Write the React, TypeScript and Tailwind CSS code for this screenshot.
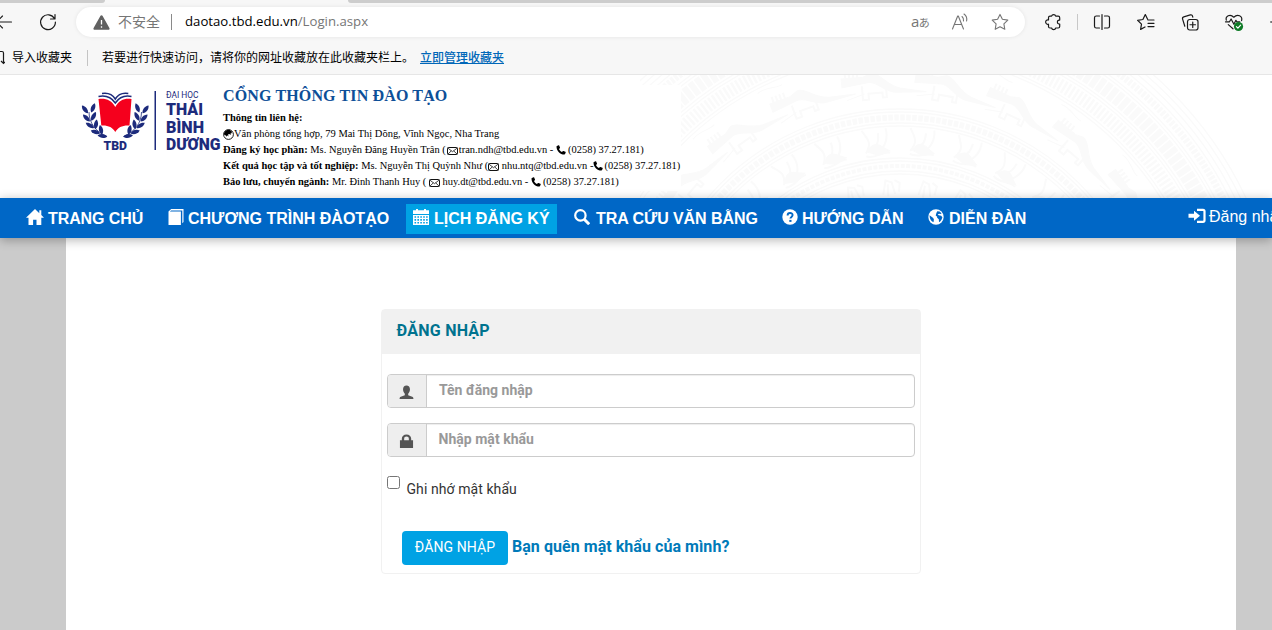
import React from "react";

const NAVY = "#1d2b7c";

/* ---------- browser chrome icons ---------- */

function Line({ children, className = "", size = 20 }: { children: React.ReactNode; className?: string; size?: number }) {
  return (
    <svg width={size} height={size} viewBox="0 0 20 20" fill="none" stroke="currentColor" strokeWidth="1.1" strokeLinecap="round" strokeLinejoin="round" className={"block shrink-0 " + className}>
      {children}
    </svg>
  );
}

const BackIcon = () => <Line><path d="M17.500 10H2.500M8.500 4 2.500 10l6 6" /></Line>;
const ReloadIcon = () => <Line><path d="M16.600 6.800A7.400 7.400 0 1 0 17.400 10M17 2.600v4.400h-4.500" strokeWidth="1.200" /></Line>;
const StarIcon = () => <Line><path d="m10 2.400 2.400 4.900 5.400.8-3.900 3.800.9 5.400-4.800-2.600-4.800 2.600.9-5.400-3.900-3.800 5.400-.8z" /></Line>;
const PuzzleIcon = () => (
  <Line><path d="M7 4.200h1.600a2.100 2.100 0 0 1 4.100 0h2.500c.8 0 1.500.7 1.500 1.500v2.400h-.8a2 2 0 0 0 0 3.900h.8v2.500c0 .8-.7 1.500-1.500 1.500h-2.500a2.100 2.100 0 0 1-4.100 0H7c-.8 0-1.500-.7-1.500-1.500v-2.300a2.200 2.200 0 1 1 0-4.200V5.700c0-.8.7-1.500 1.500-1.500z" strokeWidth="1.200" /></Line>
);
const SplitIcon = () => (
  <Line><path d="M7.500 4H4.300C3.300 4 2.500 4.800 2.500 5.800v8.400c0 1 .8 1.800 1.800 1.800h3.200M12.500 4h3.200c1 0 1.800.8 1.800 1.800v8.400c0 1-.8 1.800-1.800 1.800h-3.200M10 2.500v15" strokeWidth="1.200" /></Line>
);
const FavListIcon = () => (
  <Line><path d="M9 15 4.600 17.400l.9-5.300-3.900-3.800 5.300-.8 2.400-4.900 2.300 4.700M12 8h6M12 11.300h6M12 14.600h6" strokeWidth="1.200" /></Line>
);
const CollectionsIcon = () => (
  <Line><rect x="7.500" y="7.500" width="10.500" height="10.500" rx="2.200" strokeWidth="1.200" /><path d="M12.750 10v5.500M10 12.750h5.500M4.800 14.200 2.600 7.100c-.3-1 .2-1.900 1.200-2.200l6.500-2c1-.3 1.900.2 2.200 1.200l.3 1.100" strokeWidth="1.200" /></Line>
);
const HealthIcon = () => (
  <Line>
    <path d="M2.300 8.200C1.200 4.200 6 1.500 9.800 5.200 13.600 1.500 18.800 4 17.600 8.600M1.500 9.800h4l1.600-2.800 2.800 5.300 2-4 .9 1.500h3M4.300 12.600l4.700 4.200" strokeWidth="1.200" />
    <circle cx="14.500" cy="14.500" r="4.600" fill="#0f7b27" stroke="none" />
    <path d="m12.400 14.600 1.500 1.500 2.700-2.900" stroke="#fff" strokeWidth="1.200" />
  </Line>
);
const WarnIcon = () => (
  <svg width="17" height="15" viewBox="0 0 17 15" className="block shrink-0">
    <path d="M7.500.8a1.100 1.100 0 0 1 2 0l6.900 12.300a1.100 1.100 0 0 1-1 1.700H1.600a1.100 1.100 0 0 1-1-1.700z" fill="#616161" />
    <path d="M8.500 5v4.600M8.500 11.200v1.500" stroke="#fff" strokeWidth="1.300" />
  </svg>
);

/* ---------- navigation and form glyphs (16-unit grid) ---------- */

function Glyph({ children, size = 16, className = "" }: { children: React.ReactNode; size?: number; className?: string }) {
  return <svg width={size} height={size} viewBox="0 0 16 16" fill="currentColor" className={"block shrink-0 " + className}>{children}</svg>;
}
const HomeGlyph = () => (
  <svg width="18" height="16" viewBox="0 0 18 16" fill="currentColor" className="-mt-[4px] block shrink-0"><path d="M9 0 0 8.700h2.500V16h4.600v-5.200h3.400V16h4.800V8.700H18l-2.700-2.600V1.300h-2v2.900z" /></svg>
);
const BookGlyph = () => <Glyph className="-mt-[4px]"><path d="M3.200 0H15.500v13l-1.200 1.300V1.400H3.100L1.800 2.600h11.100V16H.5V2.600z" /></Glyph>;
const CalendarGlyph = () => (
  <Glyph className="-mt-[4px]"><path fillRule="evenodd" d="M0 1.300h3V0h2v1.300h6V0h2v1.300h3V5H0zM0 6h16v10H0zM1.500 7.200v1.600h1.600V7.200zm2.900 0v1.600H6V7.200zm2.900 0v1.600h1.600V7.200zm2.900 0v1.600h1.600V7.200zm2.900 0v1.600h1.600V7.200zM1.500 10.100v1.600h1.600v-1.600zm2.900 0v1.600H6v-1.600zm2.900 0v1.600h1.600v-1.600zm2.900 0v1.600h1.600v-1.600zm2.900 0v1.600h1.600v-1.600zM1.500 13v1.600h1.600V13zm2.900 0v1.600H6V13zm2.900 0v1.600h1.600V13zm2.900 0v1.600h1.600V13zm2.900 0v1.600h1.600V13z" /></Glyph>
);
const SearchGlyph = () => <Glyph className="-mt-[4px]"><circle cx="6.400" cy="6.400" r="5.200" fill="none" stroke="currentColor" strokeWidth="2.200" /><path d="m10.200 10.200 5 5" stroke="currentColor" strokeWidth="3" /></Glyph>;
const HelpGlyph = () => (
  <Glyph className="-mt-[4px]"><circle cx="8" cy="8" r="7.700" /><path d="M5.600 6.400c0-3.200 5-3 5-.3 0 1.900-2.200 1.700-2.200 3.500" fill="none" stroke="#0067c6" strokeWidth="1.900" /><path d="M7.300 10.900h2.200v2H7.300z" fill="#0067c6" /></Glyph>
);
const GlobeGlyph = () => (
  <Glyph className="-mt-[4px]"><circle cx="8" cy="8" r="7.700" /><path d="M9.300 2.300 11.600 2.500l2 2-1 .6-1.600-.4-1.300.8 1 .8 2.400.5 1.300 1.400-.9 2.600-1.700 2.300-.8-.4-.2-2.400-1.700-1.600.1-1-1.500-1.100.7-2.600zM1.500 6.300l1.400.9 2.300 1.900.7 1.400-.4 2.700C3 12.200 1.600 9.800 1.500 6.300z" fill="#0067c6" /></Glyph>
);
const EarthMark = () => (
  <svg width="11" height="11" viewBox="0 0 11 11" className="block shrink-0"><circle cx="5.500" cy="5.500" r="4.900" fill="#fff" stroke="#000" strokeWidth=".9" /><path d="M.8 5.500C1 2 4 .4 6.500.8l2.500 2-.5 1.400-1 .2.300 1.600-1.600-1L5 5.500l.6 2L4 6.300l-.4 1.400L2.500 6.300z" /></svg>
);
const LoginGlyph = () => (
  <svg width="18" height="16" viewBox="0 0 18 16" className="-mt-[2px] block shrink-0" fill="none" stroke="currentColor" strokeWidth="2.200"><path d="M9 1.800h6c1 0 1.500.5 1.500 1.500v9c0 1-.5 1.500-1.500 1.500H9" /><path d="M6 2.800v3H.5v4H6v3l6-5z" fill="currentColor" stroke="none" /></svg>
);
const UserGlyph = () => <Glyph size={15}><path d="M8 .5c2.300 0 3.700 1.600 3.700 4.100 0 2-.8 3.700-1.900 4.600v1.700l4.300 1.700c.9.4 1.300 1 1.300 2.400H.6c0-1.400.4-2 1.300-2.400l4.300-1.700V9.200C5.100 8.300 4.300 6.600 4.300 4.600 4.300 2.100 5.700.5 8 .5z" /></Glyph>;
const LockGlyph = () => <Glyph size={15}><path fillRule="evenodd" d="M1 6.700h2V5C3 2.300 5.100.4 8 .4S13 2.300 13 5v1.700h2V15H1zm4.500 0h5V5c0-1.500-1-2.300-2.500-2.300S5.500 3.500 5.500 5z" /></Glyph>;

const Mail = () => (
  <svg width="11" height="8" viewBox="0 0 11 8" className="mt-px block shrink-0" fill="none" stroke="#111" strokeWidth="1"><rect x=".5" y=".5" width="10" height="7" rx=".8" /><path d="m1 1.200 4.500 3.500L10 1.200M1 7l3.300-3.100M10 7 6.700 3.900" strokeWidth=".8" /></svg>
);
const Phone = () => (
  <svg width="10" height="10" viewBox="0 0 16 16" className="block shrink-0" fill="#000"><path d="M1.500 1.500 4 .5c.6-.2 1 0 1.200.5l1.200 3c.2.500 0 .9-.3 1.200L4.800 6.500c1 2.200 2.500 3.700 4.700 4.700l1.300-1.300c.3-.3.700-.5 1.200-.3l3 1.200c.5.2.7.6.5 1.200l-1 2.500c-.2.500-.6.700-1.100.7C6.500 15 1 9.500.8 2.600c0-.5.2-.9.700-1.100z" /></svg>
);

/* ---------- university logo ---------- */

const LEAVES: [number, number, number][] = [
  [5, 25.5, -38], [13, 24, 22], [6.5, 34, -45], [13.5, 32.5, 28], [10, 41.5, -58], [16, 40.5, 8], [15.500, 48, -72], [21, 46, -12], [22.500, 52, -82],
];
function Branch() {
  return (
    <g fill={NAVY}>
      {LEAVES.map(([x, y, r], i) => (
        <path key={i} d="M0-5C2.800-2 2.600 2.300 0 4.800-2.600 2.300-2.800-2 0-5z" transform={`translate(${x} ${y}) rotate(${r})`} />
      ))}
      <path d="M9 28c0 11 7 20 18 24.500" fill="none" stroke={NAVY} strokeWidth=".8" />
    </g>
  );
}
function Logo() {
  return (
    <svg width="143" height="66" viewBox="80 88 143 66" className="block shrink-0" fontFamily="Roboto, sans-serif">
      <g transform="translate(80 84)"><Branch /></g>
      <g transform="translate(150.5 84) scale(-1 1)"><Branch /></g>
      <path d="M98.500 99c7-1 13 1 16.800 8C119 100 124.500 98 131.500 99l-2 26.500c-6.500-.5-11.500 1.500-14.200 6.500-2.700-5-7.800-7-14-6.500z" fill="#f5001d" />
      <path d="M98.500 96.500c7.500-1.500 13 1 16.800 6.500 3.700-5.500 9-8 16.200-6.500M102 93.500c6-1 10.500 1 13.300 5.500 2.700-4.500 7-6.500 13-5.500" fill="none" stroke={NAVY} strokeWidth="1.500" />
      <text x="103.500" y="150" fontSize="13" fontWeight="900" fill={NAVY} textLength="23.500" lengthAdjust="spacingAndGlyphs">TBD</text>
      <rect x="154.500" y="91" width="1.500" height="59" fill={NAVY} />
      <g fill={NAVY}>
        <text x="166" y="98" fontSize="8.3" textLength="32.5" lengthAdjust="spacingAndGlyphs">ĐẠI HỌC</text>
        <g fontSize="16.2" fontWeight="900">
          <text x="166" y="115" textLength="37" lengthAdjust="spacingAndGlyphs">THÁI</text>
          <text x="166" y="132.5" textLength="38" lengthAdjust="spacingAndGlyphs">BÌNH</text>
          <text x="166" y="149.700" textLength="54.5" lengthAdjust="spacingAndGlyphs">DƯƠNG</text>
        </g>
      </g>
    </svg>
  );
}

/* ---------- faint bronze drum behind the header ---------- */

const RINGS = [204, 201, 191, 188, 253, 250, 239, 236, 308, 311, 329, 332, 352, 355, 368, 373, 378, 383];
const BIRDS = [-50, -35, -20, -5, 10, 25, 40, 55];
const FIGURES = [-54, -42, -30, -18, -6, 6, 18, 30, 42, 54];
function Drum() {
  return (
    <svg width="632" height="123" viewBox="640 75 632 123" className="absolute right-0 top-0" fill="none" stroke="#fafafa">
      <g transform="translate(900 362)">
        {RINGS.map((r) => <circle key={r} r={r} strokeWidth="1.300" />)}
        <circle r="196" strokeWidth="4" strokeDasharray="4 1.500" />
        <circle r="244.500" strokeWidth="6" strokeDasharray="4.500 1.500" />
        <circle r="320" strokeWidth="13" strokeDasharray="2.500 2" />
        <circle r="342" strokeWidth="15" strokeDasharray="6 1.500" />
        <circle r="362" strokeWidth="7" strokeDasharray="3 1.500" />
        {BIRDS.map((a) => (
          <g key={a} transform={`rotate(${a}) translate(0 -279)`}>
            <path d="M-34-8h22l8-3C4-12 10 2 24 6l26 6-30-2C8 9 2-3-8-2l-26 3z" fill="#fafafa" />
            <path d="M-14 1v14h6V9h14v5h4V3M-30-8v-6M-26-8v-6M-22-8v-6M-18-8v-6" strokeWidth="2" />
            <path d="M-42-22c10-4 18 2 26 0M-30 14l18-5" />
          </g>
        ))}
        {FIGURES.map((a) => (
          <g key={a} transform={`rotate(${a}) translate(0 -220)`}>
            <path d="M-12 9C-4-2-10-6-14-14M-6 4c6 0 8-6 8-14M0 10C8 4 12-3 10-14M-12 12c8 4 18-4 24-1" strokeWidth="2" />
            <path d="M-10 8c4-8 10-9 16-3L12 9 0 12z" fill="#fafafa" />
          </g>
        ))}
        {FIGURES.map((a) => <path key={a} d="M-8 8-5-6l6 2 3 12M-3-2v12M4-6l5 3-1 9" strokeWidth="2" transform={`rotate(${a + 3}) translate(0 -176)`} />)}
      </g>
    </svg>
  );
}

const T = ({ children }: { children: React.ReactNode }) => <span className="whitespace-pre">{children}</span>;
const B = ({ children }: { children: React.ReactNode }) => <b className="whitespace-pre font-bold">{children}</b>;

export default function App() {
  return (
    <div className="flex h-[630px] w-[1272px] flex-col overflow-hidden bg-white">
      <div className="flex h-[3px] shrink-0 bg-[#f7f7f7]">
        <div className="h-[3px] w-[105px] rounded-br-[3px] bg-[#cdcdcd]" />
        <div className="ml-[243px] h-[3px] flex-1 rounded-bl-[3px] bg-[#cdcdcd]" />
      </div>
      <div className="flex h-[72px] shrink-0 flex-col border-b border-[#e6e6e6] bg-[#f7f7f7] font-['Open_Sans','Noto_Sans_CJK_SC',sans-serif] text-[#1a1a1a]">
        <div className="flex h-[38px] items-center">
          <div className="-ml-[6px]"><BackIcon /></div>
          <div className="ml-[24px]"><ReloadIcon /></div>
          <div className="ml-[18px] flex h-[30px] w-[949px] shrink-0 items-center rounded-full bg-white pl-[17px] text-[#767676] shadow-[0_0_4px_rgba(0,0,0,0.08)]">
            <WarnIcon />
            <span className="-mt-px ml-2 w-[53px] text-[14px]">不安全</span>
            <div className="h-4 w-px bg-[#8a8a8a]" />
            <span className="ml-[13px] w-[726px] text-[13.2px]"><span className="text-black">daotao.tbd.edu.vn</span>/Login.aspx</span>
            <span className="-mt-px w-[39px] shrink-0 text-[15px] leading-5 tracking-[-0.5px]">a<span className="text-[11px]">あ</span></span>
            <Line><path d="M2.500 17 7.700 4h.6l5.200 13M4.300 12.500h7.400M12 4.500c1.400 1.200 1.800 2.700 1.500 4.500M14 2c2.400 1.800 3.200 4.200 2.600 7" /></Line>
            <div className="ml-[20px]"><StarIcon /></div>
          </div>
          <div className="ml-[18px]"><PuzzleIcon /></div>
          <div className="ml-[14px] h-4 w-px shrink-0 bg-[#c8c8c8]" />
          <div className="ml-[14px]"><SplitIcon /></div>
          <div className="ml-[24px]"><FavListIcon /></div>
          <div className="ml-[24px]"><CollectionsIcon /></div>
          <div className="ml-[24px]"><HealthIcon /></div>
          <div className="ml-[26px] h-[2px] w-1 shrink-0 rounded-full bg-[#767676]" />
        </div>
        <div className="flex h-[33px] items-center text-[12px] text-black">
          <svg width="5" height="15" viewBox="0 0 5 15" fill="none" stroke="#1a1a1a" strokeWidth="1.200" className="block"><path d="M0 1.500h2c1 0 1.500.5 1.500 1.500v10M1 11l2.500 2.500L5 12" /></svg>
          <span className="ml-[7px] w-[75px]">导入收藏夹</span>
          <div className="h-4 w-px bg-[#c4c4c4]" />
          <span className="ml-[14px] w-[318px]">若要进行快速访问，请将你的网址收藏放在此收藏夹栏上。</span>
          <span className="font-medium text-[#0067b8] underline">立即管理收藏夹</span>
        </div>
      </div>

      <header className="relative flex h-[123px] shrink-0 bg-white pl-[80px] pt-[10px]">
        <Drum />
        <div className="relative pt-[3px]"><Logo /></div>
        <div className="relative flex h-[106px] w-[458px] flex-col bg-white font-['Liberation_Serif',serif] text-[10.48px] leading-4 text-black">
          <h1 className="h-[25px] text-[16px] font-bold leading-[22px] tracking-[0.14px] text-[#0d4f98]">CỔNG THÔNG TIN ĐÀO TẠO</h1>
          <p className="h-4"><B>Thông tin liên hệ:</B></p>
          <p className="flex h-4 items-center"><EarthMark /><T>Văn phòng tổng hợp, 79 Mai Thị Dõng, Vĩnh Ngọc, Nha Trang</T></p>
          <p className="flex h-4 items-center"><B>Đăng ký học phần: </B><T>Ms. Nguyễn Đăng Huyền Trân (</T><span className="mx-[1px]"><Mail /></span><T>tran.ndh@tbd.edu.vn - </T><Phone /><span className="ml-[2px]">(0258) 37.27.181)</span></p>
          <p className="flex h-4 items-center"><B>Kết quả học tập và tốt nghiệp: </B><T>Ms. Nguyễn Thị Quỳnh Như (</T><Mail /><T> nhu.ntq@tbd.edu.vn -</T><Phone /><span className="ml-px whitespace-nowrap">(0258) 37.27.181)</span></p>
          <p className="flex h-4 items-center"><B>Bảo lưu, chuyển ngành: </B><T>Mr. Đinh Thanh Huy ( </T><Mail /><T> huy.dt@tbd.edu.vn - </T><Phone /><span className="ml-[2px]">(0258) 37.27.181)</span></p>
        </div>
      </header>

      <nav className="relative z-10 flex h-10 shrink-0 items-center overflow-hidden whitespace-nowrap bg-[#0067c6] pl-[26px] pt-[2px] font-['Liberation_Sans',sans-serif] text-[16px] font-bold text-white shadow-[0_2px_10px_rgba(0,0,0,0.3)]">
        <div className="flex w-[142px] shrink-0 items-center gap-1"><HomeGlyph /><span className="tracking-[-0.1px]">TRANG CHỦ</span></div>
        <div className="flex w-[238px] shrink-0 items-center gap-1"><BookGlyph /><span>CHƯƠNG TRÌNH ĐÀOTẠO</span></div>
        <div className="flex h-[30px] w-[151px] shrink-0 items-center gap-[5px] bg-[#00a2e4] pl-[7px]"><CalendarGlyph />LỊCH ĐĂNG KÝ</div>
        <div className="ml-[17px] flex w-[208px] shrink-0 items-center gap-[6px]"><SearchGlyph /><span className="tracking-[-0.07px]">TRA CỨU VĂN BẰNG</span></div>
        <div className="flex w-[146px] shrink-0 items-center gap-1"><HelpGlyph />HƯỚNG DẪN</div>
        <div className="flex w-[260px] shrink-0 items-center gap-[5px]"><GlobeGlyph />DIỄN ĐÀN</div>
        <div className="-mt-[4px] flex shrink-0 items-center gap-[3px] font-normal"><LoginGlyph />Đăng nhập</div>
      </nav>

      <main className="flex flex-1 justify-center bg-[#cbcbcb] pl-[30px]">
        <div className="flex w-[1170px] flex-col bg-white pl-[315px] pt-[71px] font-['Roboto',sans-serif]">
          <form className="flex h-[265px] w-[540px] flex-col rounded border border-[#f1f1f1] bg-white">
            <h2 className="h-[44px] bg-[#f1f1f1] pl-[14.5px] text-[16px] font-bold leading-[41px] tracking-[0.25px] text-[#00738f]">ĐĂNG NHẬP</h2>
            <div className="mx-[5px] mt-[20px] flex h-[34px] overflow-hidden rounded border border-[#ccc] shadow-[inset_0_1px_1px_rgba(0,0,0,0.075)]">
              <div className="flex w-[39px] items-center justify-center border-r border-[#ccc] bg-[#eee] pr-px pt-[2px] text-[#555]"><UserGlyph /></div>
              <span className="pl-[12px] text-[14px] font-bold leading-[31px] text-[#999]">Tên đăng nhập</span>
            </div>
            <div className="mx-[5px] mt-[15px] flex h-[34px] overflow-hidden rounded border border-[#ccc] shadow-[inset_0_1px_1px_rgba(0,0,0,0.075)]">
              <div className="flex w-[39px] items-center justify-center border-r border-[#ccc] bg-[#eee] pr-[2px] pt-[2px] text-[#555]"><LockGlyph /></div>
              <span className="pl-[11.5px] text-[14px] font-bold leading-[31px] tracking-[0.03px] text-[#999]">Nhập mật khẩu</span>
            </div>
            <label className="ml-[5px] mt-[19px] flex h-[26px] text-[14px] text-[#333]">
              <span className="block size-[13px] rounded-[2.5px] border border-[#767676] bg-white" />
              <span className="ml-[6.5px] leading-[26px] tracking-[0.08px]">Ghi nhớ mật khẩu</span>
            </label>
            <div className="ml-[20px] mt-[29px] flex items-center gap-1">
              <button type="button" className="h-[34px] w-[106px] rounded bg-[#00a2e4] pb-[2px] text-[14px] leading-[31px] tracking-[0.1px] text-white">ĐĂNG NHẬP</button>
              <span className="-mt-[3px] text-[16px] font-bold tracking-[0.05px] text-[#007ab9]">Bạn quên mật khẩu của mình?</span>
            </div>
          </form>
        </div>
      </main>
    </div>
  );
}
